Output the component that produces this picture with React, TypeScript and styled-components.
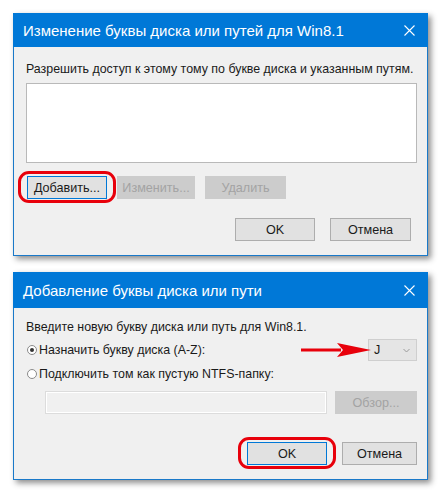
import styled, { createGlobalStyle } from 'styled-components';

const GlobalStyle = createGlobalStyle`
  body {
    margin: 0;
    background: #ffffff;
    font-family: "Liberation Sans", Arial, sans-serif;
  }
`;

const Page = styled.div`
  width: 443px;
  height: 493px;
  padding: 13px 0 0 13px;
  box-sizing: border-box;
  display: flex;
  flex-direction: column;
  gap: 16px;
`;

const Dialog = styled.div`
  width: 415px;
  background: #f0f0f0;
  border: 1px solid #1a79c9;
  border-top: none;
  box-sizing: border-box;
  box-shadow: 3px 3px 6px rgba(0, 0, 0, 0.45);
  display: flex;
  flex-direction: column;
`;

const TitleBar = styled.div<{ $h: number }>`
  height: ${(p) => p.$h}px;
  background: #0078d7;
  margin: 0 -1px;
  display: flex;
  align-items: center;
  justify-content: space-between;
  padding: 0 13px 0 10px;
  color: #ffffff;
  font-size: 15px;
  white-space: nowrap;
`;

const Body = styled.div`
  padding: 0 10px 0 12px;
  display: flex;
  flex-direction: column;
  font-size: 12.4px;
  color: #1a1a1a;
  white-space: nowrap;
`;

const Label = styled.div<{ $top: number }>`
  margin-top: ${(p) => p.$top}px;
  line-height: 16px;
`;

const ListBox = styled.div`
  margin-top: 6px;
  height: 78px;
  background: #ffffff;
  border: 1px solid #b9b9b9;
`;

const Row = styled.div<{ $top: number; $gap?: number; $end?: boolean }>`
  margin-top: ${(p) => p.$top}px;
  display: flex;
  align-items: center;
  gap: ${(p) => p.$gap ?? 8}px;
  justify-content: ${(p) => (p.$end ? 'flex-end' : 'flex-start')};
`;

const Button = styled.div<{ $w?: number; $disabled?: boolean; $focus?: boolean }>`
  position: relative;
  width: ${(p) => p.$w ?? 80}px;
  height: 23px;
  box-sizing: border-box;
  display: flex;
  align-items: center;
  justify-content: center;
  font-size: 12.6px;
  background: ${(p) => (p.$disabled ? '#cccccc' : '#e1e1e1')};
  color: ${(p) => (p.$disabled ? '#a3a3a3' : '#1a1a1a')};
  border: 1px solid ${(p) => (p.$focus ? '#0078d7' : p.$disabled ? '#cccccc' : '#adadad')};
`;

const RedRing = styled.div`
  position: absolute;
  left: -10px;
  right: -10px;
  top: -6px;
  bottom: -5px;
  border: 3px solid #e8000b;
  border-radius: 11px;
  pointer-events: none;
`;

const Radio = styled.span<{ $checked?: boolean }>`
  width: 8px;
  height: 8px;
  border-radius: 50%;
  border: 1px solid #8a8a8a;
  background: #ffffff;
  display: inline-flex;
  align-items: center;
  justify-content: center;
  margin: 0 2px 0 1px;
  flex-shrink: 0;

  &::after {
    content: '';
    width: 4px;
    height: 4px;
    border-radius: 50%;
    background: ${(p) => (p.$checked ? '#333333' : 'transparent')};
  }
`;

const RadioRow = styled.div<{ $top: number }>`
  margin-top: ${(p) => p.$top}px;
  display: flex;
  align-items: center;
  height: 22px;
  position: relative;
`;

const Spacer = styled.div`
  flex: 1;
`;

const Combo = styled.div`
  width: 49px;
  height: 22px;
  box-sizing: border-box;
  background: #e5e5e5;
  border: 1px solid #cfcfcf;
  display: flex;
  align-items: center;
  justify-content: space-between;
  padding: 0 6px 0 5px;
  font-size: 12.6px;
`;

const Arrow = styled.svg`
  position: absolute;
  right: 46px;
  top: 4px;
`;

const PathInput = styled.div`
  margin-left: 19px;
  width: 282px;
  height: 23px;
  box-sizing: border-box;
  border: 1px solid #dcdcdc;
  background: #f0f0f0;
  box-shadow: inset 0 0 0 1px #ffffff;
`;

function CloseIcon() {
  return (
    <svg width="11" height="11" viewBox="0 0 11 11">
      <path d="M0.5 0.5 L10.5 10.5 M10.5 0.5 L0.5 10.5" stroke="#ffffff" strokeWidth="1.1" />
    </svg>
  );
}

function Chevron() {
  return (
    <svg width="7" height="5" viewBox="0 0 7 5">
      <path d="M0.5 1 L3.5 4 L6.5 1" stroke="#9a9a9a" strokeWidth="1" fill="none" />
    </svg>
  );
}

export default function App() {
  return (
    <>
      <GlobalStyle />
      <Page>
        <Dialog>
          <TitleBar $h={34}>
            <span>Изменение буквы диска или путей для Win8.1</span>
            <CloseIcon />
          </TitleBar>
          <Body>
            <Label $top={14}>Разрешить доступ к этому тому по букве диска и указанным путям.</Label>
            <ListBox />
            <Row $top={13} $gap={10}>
              <Button $focus style={{ marginLeft: 1 }}>
                Добавить...
                <RedRing />
              </Button>
              <Button $disabled $w={78}>Изменить...</Button>
              <Button $disabled $w={81}>Удалить</Button>
            </Row>
            <Row $top={19} $gap={15} $end style={{ marginBottom: 14, marginRight: 6 }}>
              <Button>OK</Button>
              <Button $w={81}>Отмена</Button>
            </Row>
          </Body>
        </Dialog>

        <Dialog>
          <TitleBar $h={36}>
            <span>Добавление буквы диска или пути</span>
            <CloseIcon />
          </TitleBar>
          <Body>
            <Label $top={11}>Введите новую букву диска или путь для Win8.1.</Label>
            <RadioRow $top={4}>
              <Radio $checked />
              <span>Назначить букву диска (A-Z):</span>
              <Spacer />
              <Arrow width="70" height="14" viewBox="0 0 70 14">
                <path d="M0 7 H40" stroke="#e8000b" strokeWidth="3" />
                <path d="M36 0 L70 7 L36 14 L42 7 Z" fill="#e8000b" />
              </Arrow>
              <Combo>
                <span>J</span>
                <Chevron />
              </Combo>
            </RadioRow>
            <RadioRow $top={2}>
              <Radio />
              <span>Подключить том как пустую NTFS-папку:</span>
            </RadioRow>
            <Row $top={6}>
              <PathInput />
              <Button $disabled $w={82}>Обзор...</Button>
            </Row>
            <Row $top={28} $gap={15} $end style={{ marginBottom: 14 }}>
              <Button $focus>
                OK
                <RedRing />
              </Button>
              <Button $w={75}>Отмена</Button>
            </Row>
          </Body>
        </Dialog>
      </Page>
    </>
  );
}
